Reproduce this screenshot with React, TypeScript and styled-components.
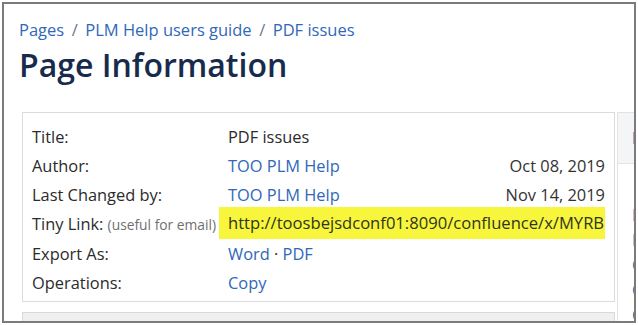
import React from "react";
import styled, { createGlobalStyle } from "styled-components";

const Global = createGlobalStyle`
  html, body { margin: 0; padding: 0; background: #ffffff; }
  body { font-family: "Open Sans", "Noto Sans", sans-serif; }
  * { box-sizing: border-box; }
`;

const Frame = styled.div`
  width: 634px;
  height: 321px;
  margin: 2px 0 0 2px;
  border: 2px solid #7b7b7b;
  background: #ffffff;
  overflow: hidden;
  padding: 15px 0 0 15px;
`;

const Breadcrumbs = styled.nav`
  display: flex;
  align-items: baseline;
  font-size: 16.5px;
  line-height: 22px;
  color: #3068b8;
  white-space: nowrap;
`;

const Crumb = styled.a`
  color: #3068b8;
  text-decoration: none;
`;

const Sep = styled.span`
  color: #6b778c;
  margin: 0 7.5px;
`;

const Heading = styled.h1`
  margin: 3.6px 0 0 0;
  font-size: 32px;
  line-height: 40px;
  font-weight: 600;
  color: #172b4d;
  white-space: nowrap;
`;

const Columns = styled.div`
  display: flex;
  align-items: flex-start;
  gap: 2px;
  margin: 27px 0 0 3px;
  width: 900px;
`;

const MainColumn = styled.div`
  width: 593px;
  flex: none;
  display: flex;
  flex-direction: column;
  gap: 10px;
`;

const InfoPanel = styled.section`
  border: 1px solid #dcdcdc;
  padding: 9px 9px 4px 9px;
  display: grid;
  grid-template-columns: 196px 1fr auto;
  font-size: 16.4px;
  line-height: 29px;
  color: #2b2b2b;
  white-space: nowrap;
`;

const Label = styled.div`
  color: #2b2b2b;
`;

const Hint = styled.span`
  font-size: 13.8px;
  color: #6f6f6f;
`;

const Value = styled.div<{ $span?: boolean }>`
  grid-column: ${(p) => (p.$span ? "2 / 4" : "auto")};
`;

const DateCell = styled.div`
  text-align: right;
  color: #333333;
`;

const Link = styled.a`
  color: #3068b8;
  text-decoration: none;
`;

const TinyLink = styled.div`
  grid-column: 2 / 4;
  margin: -1.5px 0 -1.5px -9px;
  padding-left: 9px;
  height: 32px;
  line-height: 32px;
  font-size: 16.6px;
  background: #f7f63c;
  color: #30351a;
  overflow: hidden;
  text-overflow: clip;
`;

const NextPanelHeader = styled.div`
  height: 30px;
  border: 1px solid #d9d9d9;
  background: #efefef;
`;

const SidePanel = styled.aside`
  width: 260px;
  flex: none;
  border: 1px solid #e3e3e3;
  border-right: none;
`;

const SideHeader = styled.div`
  height: 51px;
  background: #f4f5f7;
  border-bottom: 1px solid #e4e4e4;
  padding: 14px 0 0 14px;
  font-size: 16px;
  line-height: 22px;
  color: #2a5aa8;
  font-weight: 600;
  white-space: nowrap;
`;

const SideList = styled.ul`
  list-style: none;
  margin: 0;
  padding: 39px 0 0 14px;
  font-size: 16px;
  line-height: 25px;
  white-space: nowrap;
`;

const SideItem = styled.li`
  color: #3068b8;
`;

export default function App() {
  return (
    <>
      <Global />
      <Frame>
        <Breadcrumbs>
          <Crumb>Pages</Crumb>
          <Sep>/</Sep>
          <Crumb>PLM Help users guide</Crumb>
          <Sep>/</Sep>
          <Crumb>PDF issues</Crumb>
        </Breadcrumbs>
        <Heading>Page Information</Heading>
        <Columns>
          <MainColumn>
            <InfoPanel>
              <Label>Title:</Label>
              <Value $span>PDF issues</Value>

              <Label>Author:</Label>
              <Value>
                <Link>TOO PLM Help</Link>
              </Value>
              <DateCell>Oct 08, 2019</DateCell>

              <Label>Last Changed by:</Label>
              <Value>
                <Link>TOO PLM Help</Link>
              </Value>
              <DateCell>Nov 14, 2019</DateCell>

              <Label>
                Tiny Link: <Hint>(useful for email)</Hint>
              </Label>
              <TinyLink>http://toosbejsdconf01:8090/confluence/x/MYRB</TinyLink>

              <Label>Export As:</Label>
              <Value $span>
                <Link>Word</Link> · <Link>PDF</Link>
              </Value>

              <Label>Operations:</Label>
              <Value $span>
                <Link>Copy</Link>
              </Value>
            </InfoPanel>
            <NextPanelHeader />
          </MainColumn>
          <SidePanel>
            <SideHeader>Labels</SideHeader>
            <SideList>
              <SideItem>PLM Help users guide</SideItem>
              <SideItem>PDF issues</SideItem>
              <SideItem>Confluence export</SideItem>
              <SideItem>Comments</SideItem>
              <SideItem>Content</SideItem>
            </SideList>
          </SidePanel>
        </Columns>
      </Frame>
    </>
  );
}
